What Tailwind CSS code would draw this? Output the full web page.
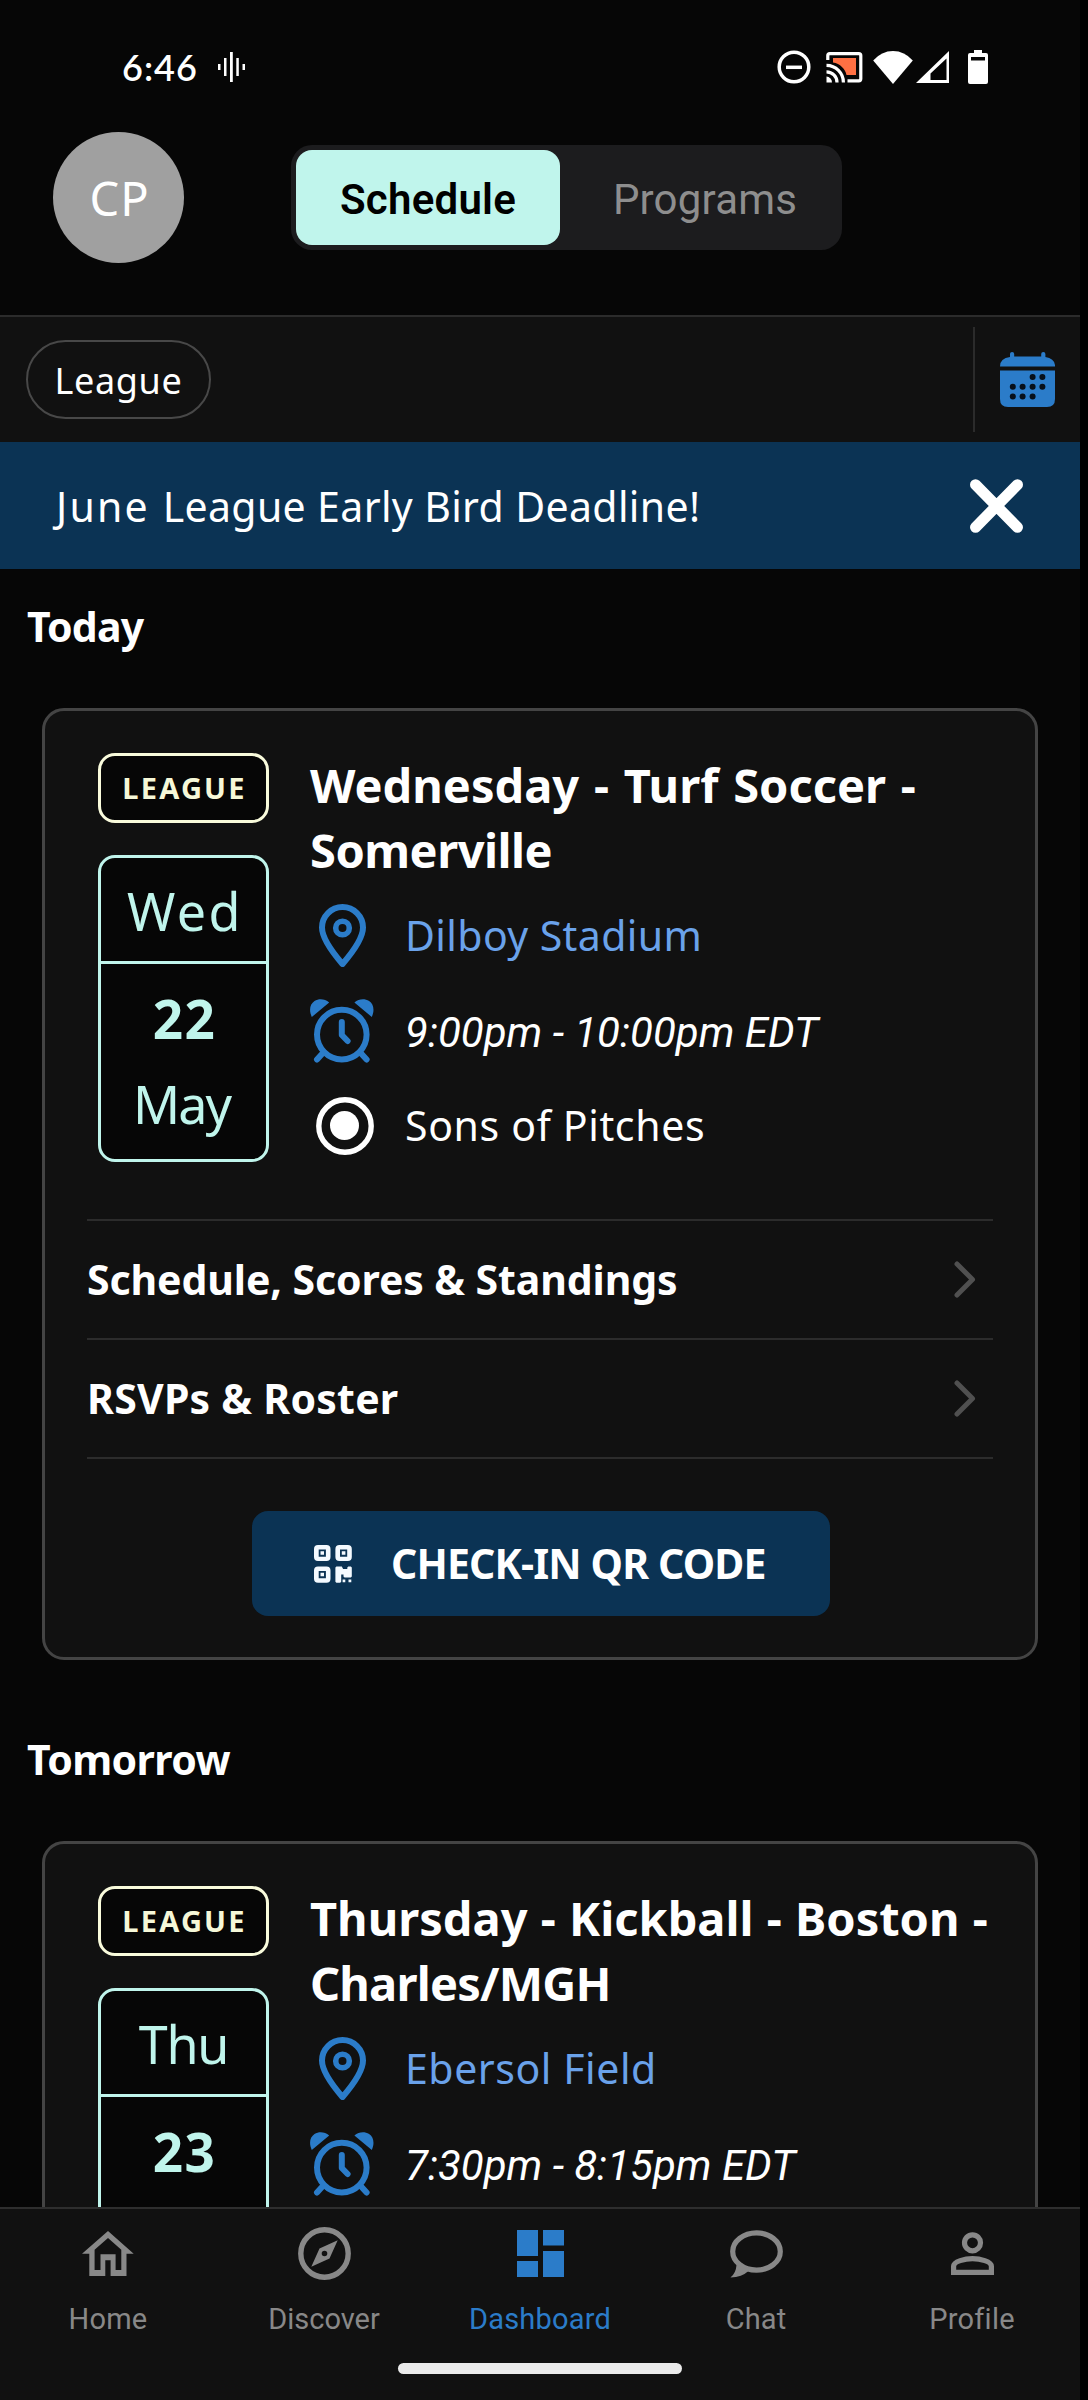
<!DOCTYPE html>
<html lang="en">
<head>
<meta charset="utf-8">
<title>Dashboard</title>
<script src="https://cdn.jsdelivr.net/npm/@tailwindcss/browser@4"></script>
</head>
<body class="bg-black">
<svg class="hidden" aria-hidden="true">
  <symbol id="pin" viewBox="0 0 47 63">
    <path d="M23.5 60C20.5 56.500 3 36.500 3 23.500a20.500 20.500 0 0 1 41 0C44 36.500 26.500 56.500 23.500 60Z" fill="none" stroke="currentColor" stroke-width="6" stroke-linejoin="round"/>
    <circle cx="23.500" cy="24" r="6.800" fill="none" stroke="currentColor" stroke-width="5.600"/>
  </symbol>
  <symbol id="alarm" viewBox="0 0 64 64">
    <g fill="none" stroke="currentColor" stroke-width="6" stroke-linecap="round" stroke-linejoin="round">
      <circle cx="31.800" cy="35.600" r="24.800"/>
      <path d="M31.800 23v13l5.800 6M12 55l-5 5.500M51.600 55l5 5.500"/>
    </g>
    <path d="M1.800 18C-1.500 10.500 .2 5 4.500 2 9-.9 14.800-.3 19.200 3.400ZM61.800 18C65 10.500 63.400 5 59.100 2 54.600-.9 48.800-.3 44.400 3.400Z" fill="currentColor"/>
  </symbol>
  <symbol id="chevron" viewBox="0 0 22 37">
    <path d="M3 3l15.500 15.500L3 34" fill="none" stroke="currentColor" stroke-width="5" stroke-linecap="round" stroke-linejoin="round"/>
  </symbol>
</svg>

<div class="flex h-[2400px] w-[1080px] flex-col overflow-hidden bg-[#060606] font-['Noto_Sans',sans-serif] text-white">

  <!-- Status bar -->
  <div class="mt-[47px] flex h-[40px] shrink-0 items-center pr-[92px] pl-[122px]">
    <span class="w-[96px] font-[Lato,sans-serif] text-[36px] font-semibold leading-[40px] tracking-[1px]">6:46</span>
    <svg class="h-[30px] w-[28px]" viewBox="0 0 28 30" fill="#fff"><path d="M0 12h2.500v6H0zM6 6h2.500v18H6zM12 0h2.800v30H12zM18.300 6h2.500v18h-2.500zM24.500 12H27v6h-2.500z"/></svg>
    <div class="ml-auto flex items-center">
      <svg class="h-[34px] w-[34px]" viewBox="0 0 34 34" fill="none" stroke="#fff" stroke-width="3.500"><circle cx="17" cy="17" r="14.800"/><path d="M9 17.300h16"/></svg>
      <svg class="ml-[15px] h-[31px] w-[37px]" viewBox="0 0 37 31">
        <path d="M7 6h23v17h-9.500C19.500 17 14 11.500 7 10.500Z" fill="#ff7043"/>
        <g fill="none" stroke="#fff" stroke-width="3.200"><path d="M1.800 8V3.600q0-2 2-2h29q2 0 2 2v23.200q0 2-2 2H21.500"/><path d="M.5 19.800A10.600 10.600 0 0 1 11 30.400M.5 13.400A17 17 0 0 1 17.400 30.400"/></g>
        <path d="M.5 24.600a5.800 5.800 0 0 1 5.500 5.800H.5z" fill="#fff"/>
      </svg>
      <svg class="ml-[10px] h-[33px] w-[40px]" viewBox="0 0 40 33" fill="#fff"><path d="M20 33 .2 9.500Q8.500 0 20 0t19.800 9.500Z"/></svg>
      <svg class="ml-[3px] h-[32px] w-[33px]" viewBox="0 0 33 32" fill="#fff" fill-rule="evenodd"><path d="M33 0v32H0ZM30.500 7.500 14.500 22.500v6.500h16Z"/></svg>
      <svg class="ml-[19px] h-[34px] w-[20px]" viewBox="0 0 20 34" fill="#fff" fill-rule="evenodd"><path d="M6 0h8v3h4q2 0 2 2v27q0 2-2 2H2q-2 0-2-2V5q0-2 2-2h4ZM3 7v3.500h14V7Z"/></svg>
    </div>
  </div>

  <!-- Header -->
  <header class="flex h-[228px] shrink-0 items-start pl-[53px]">
    <div class="mt-[45px] flex size-[131px] items-center justify-center rounded-full bg-[#a0a0a0] pl-[2px] pt-[1px] text-[47px] tracking-[1px]">CP</div>
    <div class="mt-[58px] ml-[107px] flex h-[105px] w-[551px] rounded-[21px] bg-[#1c1c1e] p-[5px] font-[Roboto,sans-serif] text-[42px]">
      <div class="flex h-[95px] w-[264px] items-center justify-center rounded-[16px] bg-[#c0f5ec] pt-[4px] font-semibold tracking-[.25px] text-black">Schedule</div>
      <div class="flex h-[95px] flex-1 items-center justify-center pt-[4px] pl-[13px] tracking-[.2px] text-[#8e8e8e]">Programs</div>
    </div>
  </header>

  <!-- Filters -->
  <div class="flex h-[127px] shrink-0 items-center border-t-2 border-[#2b2b2b] bg-[#111] pl-[26px]">
    <div class="flex h-[79px] w-[185px] items-center justify-center rounded-full border-2 border-[#484848] pt-[2px] text-[36px] tracking-[.65px]">League</div>
    <div class="ml-auto flex h-[105px] w-[107px] items-center border-l-2 border-[#2b2b2b] pl-[25px]">
      <svg class="h-[55px] w-[55px]" viewBox="0 0 55 55" fill="#2b7cc9">
        <path d="M10 5V2q0-2 2.100-2t2.100 2v2.500h27V2q0-2 2.100-2t2.100 2v3q9.700 1.500 9.700 9.500H0Q0 6 10 5ZM0 18.500h55V47q0 8-8 8H8q-8 0-8-8Z"/>
        <g fill="#07101a"><circle cx="32.600" cy="25" r="3"/><circle cx="42.400" cy="25" r="3"/><circle cx="12.800" cy="34.800" r="3"/><circle cx="22.600" cy="34.800" r="3"/><circle cx="32.600" cy="34.800" r="3"/><circle cx="42.400" cy="34.800" r="3"/><circle cx="12.800" cy="44.500" r="3"/><circle cx="22.600" cy="44.500" r="3"/><circle cx="32.600" cy="44.500" r="3"/></g>
      </svg>
    </div>
  </div>

  <!-- Announcement -->
  <div class="flex h-[127px] shrink-0 items-center justify-between bg-[#0b3354] pr-[57px] pl-[56px]">
    <span class="pt-[2px] text-[41px] tracking-[.36px]"><span class="tracking-[2.200px]">June </span>League Early Bird Deadline!</span>
    <svg class="h-[54px] w-[53px]" viewBox="0 0 53 54" stroke="#fff" stroke-width="11" stroke-linecap="round"><path d="M5.500 5.700l42 42.600M47.500 5.700l-42 42.600"/></svg>
  </div>

  <!-- Schedule list -->
  <main class="min-h-0 flex-1 overflow-hidden pt-[27px]">
    <h2 class="pl-[27px] text-[41px] font-bold leading-[60px] tracking-[-.8px]">Today</h2>

    <section class="mt-[52px] ml-[42px] w-[996px] rounded-[22px] border-[3px] border-[#444] bg-[#111] pt-[42px] pb-[41px]">
      <div class="flex h-[466px] gap-[41px] pl-[53px]">
        <div class="w-[171px] shrink-0">
          <div class="flex h-[70px] items-center justify-center rounded-[17px] border-[3px] border-[#f9fbdc] bg-[#060606] pl-[2px] text-[29px] font-bold tracking-[2.230px] text-[#f6f8d8]">LEAGUE</div>
          <div class="mt-[32px] h-[307px] rounded-[17px] border-[3px] border-[#c0f5ec] bg-[#060606] text-center text-[52px] text-[#c0f5ec]">
            <div class="h-[106px] border-b-[3px] border-[#c0f5ec] pl-[3px] leading-[106px] tracking-[2.500px]">Wed</div>
            <div class="pt-[12px] pl-[2px] text-[53px] font-bold leading-[85px] tracking-[1.500px]">22</div>
            <div class="pr-[4px] leading-[85px] tracking-[-2px]">May</div>
          </div>
        </div>
        <div class="w-[700px]">
          <h3 class="text-[47px] font-bold leading-[65px]"><span class="[word-spacing:2.600px]">Wednesday - Turf Soccer -</span> <span class="tracking-[-.5px]">Somerville</span></h3>
          <div class="mt-[5px] flex h-[95px] items-center">
            <div class="flex w-[64px] justify-center"><svg class="h-[63px] w-[47px] text-[#2b7cc9]"><use href="#pin"/></svg></div>
            <span class="ml-[31px] text-[41px] tracking-[.4px] text-[#6aa2ea]">Dilboy Stadium</span>
          </div>
          <div class="flex h-[95px] items-center">
            <svg class="h-[64px] w-[64px] text-[#2b7cc9]"><use href="#alarm"/></svg>
            <span class="ml-[31px] pt-[4px] font-[Roboto,sans-serif] text-[42px] italic">9:00pm - 10:00pm EDT</span>
          </div>
          <div class="flex h-[95px] items-center">
            <div class="flex w-[64px] justify-end"><svg class="h-[58px] w-[58px]" viewBox="0 0 58 58"><circle cx="29" cy="29" r="26.200" fill="none" stroke="#fff" stroke-width="5.400"/><circle cx="28.500" cy="28.500" r="14.500" fill="#fff"/></svg></div>
            <span class="ml-[31px] text-[41px] tracking-[.65px]">Sons of Pitches</span>
          </div>
        </div>
      </div>
      <div class="mx-[42px] border-b-2 border-[#2c2c2c] text-[41px] font-bold">
        <div class="flex h-[119px] items-center justify-between border-t-2 border-[#2c2c2c] pr-[17px]">
          <span class="tracking-[-.1px]">Schedule, Scores &amp; Standings</span>
          <svg class="h-[37px] w-[22px] text-[#505050]"><use href="#chevron"/></svg>
        </div>
        <div class="flex h-[119px] items-center justify-between border-t-2 border-[#2c2c2c] pr-[17px]">
          <span class="tracking-[.25px]">RSVPs &amp; Roster</span>
          <svg class="h-[37px] w-[22px] text-[#505050]"><use href="#chevron"/></svg>
        </div>
      </div>
      <button class="mt-[52px] ml-[207px] flex h-[105px] w-[578px] items-center rounded-[16px] bg-[#0b3354] pl-[62px]">
        <svg class="h-[38px] w-[38px]" viewBox="0 0 38 38" fill="#f4faff">
          <path fill-rule="evenodd" d="M4 0h8.500q4 0 4 4v8q0 4-4 4H4q-4 0-4-4V4q0-4 4-4ZM4.700 4.500v7.200h7.200V4.500ZM25.400 0h8.400q4 0 4 4v8q0 4-4 4h-8.400q-4 0-4-4V4q0-4 4-4ZM26 4.500v7.200h7.200V4.500ZM4 21.500h8.500q4 0 4 4v8.200q0 4-4 4H4q-4 0-4-4v-8.200q0-4 4-4ZM4.700 26v7.200h7.200V26Z"/>
          <path d="M6.500 6.200H10V9.800H6.500zM27.800 6.200h3.600v3.600h-3.600zM6.500 27.700H10v3.600H6.500zM22.400 21.500h5.400l1.300 2.500h4.200v-1.500l1-1h2.500l1 1v9l-1 1h-6.300l-1-1v-2h-2.300v7.200l-1 1h-3.800l-1-1V22.500zM28.600 34.500h2.700v2.800h-2.700zM34.500 34.500h2.800v2.800h-2.800z"/>
        </svg>
        <span class="ml-[39px] text-[41px] font-bold tracking-[-.85px]">CHECK-IN QR CODE</span>
      </button>
    </section>

    <h2 class="mt-[69px] pl-[27px] text-[41px] font-bold leading-[60px] tracking-[-.6px]">Tomorrow</h2>

    <section class="mt-[52px] ml-[42px] w-[996px] rounded-[22px] border-[3px] border-[#444] bg-[#111] pt-[42px] pb-[41px]">
      <div class="flex h-[466px] gap-[41px] pl-[53px]">
        <div class="w-[171px] shrink-0">
          <div class="flex h-[70px] items-center justify-center rounded-[17px] border-[3px] border-[#f9fbdc] bg-[#060606] pl-[2px] text-[29px] font-bold tracking-[2.230px] text-[#f6f8d8]">LEAGUE</div>
          <div class="mt-[32px] h-[307px] rounded-[17px] border-[3px] border-[#c0f5ec] bg-[#060606] text-center text-[52px] text-[#c0f5ec]">
            <div class="h-[106px] border-b-[3px] border-[#c0f5ec] leading-[106px] tracking-[-1.200px]">Thu</div>
            <div class="pt-[12px] pl-[2px] text-[53px] font-bold leading-[85px] tracking-[1.500px]">23</div>
          </div>
        </div>
        <div class="w-[700px]">
          <h3 class="text-[47px] font-bold leading-[65px]"><span class="[word-spacing:1px]">Thursday - Kickball - Boston -</span> <span class="tracking-[-.8px]">Charles/MGH</span></h3>
          <div class="mt-[5px] flex h-[95px] items-center">
            <div class="flex w-[64px] justify-center"><svg class="h-[63px] w-[47px] text-[#2b7cc9]"><use href="#pin"/></svg></div>
            <span class="ml-[31px] text-[41px] tracking-[.56px] text-[#6aa2ea]">Ebersol Field</span>
          </div>
          <div class="flex h-[95px] items-center">
            <svg class="h-[64px] w-[64px] text-[#2b7cc9]"><use href="#alarm"/></svg>
            <span class="ml-[31px] pt-[4px] font-[Roboto,sans-serif] text-[42px] italic">7:30pm - 8:15pm EDT</span>
          </div>
        </div>
      </div>
    </section>
  </main>

  <!-- Bottom navigation -->
  <nav class="h-[193px] shrink-0 border-t-2 border-[#2e2e2e] bg-[#111] pt-[18px] font-[Roboto,sans-serif] text-[29px] leading-[40px] text-[#888]">
    <div class="grid grid-cols-5">
      <div class="flex flex-col items-center">
        <div class="flex h-[53px] items-center"><svg class="h-[45px] w-[52px]" viewBox="0 0 52 45" fill="currentColor" fill-rule="evenodd"><path d="M26 0l25.700 22.700h-7.200V45H28.600V29.300h-5.300V45H7.300V22.700H0ZM26 6.900 12.600 18.700V39h5.900V23.300h15.100V39h5.700V18.700Z"/></svg></div>
        <span class="mt-[19px] tracking-[.2px]">Home</span>
      </div>
      <div class="flex flex-col items-center">
        <div class="flex h-[53px] items-center"><svg class="h-[53px] w-[53px]" viewBox="0 0 53 53"><circle cx="26.500" cy="26.500" r="23.700" fill="none" stroke="currentColor" stroke-width="5.400"/><path fill="currentColor" fill-rule="evenodd" d="M39.700 13.300 31.500 31.500 13.300 39.700 21.500 21.500ZM26.500 23.700a2.800 2.800 0 1 0 0 5.600 2.800 2.800 0 1 0 0-5.600Z"/></svg></div>
        <span class="mt-[19px]">Discover</span>
      </div>
      <div class="flex flex-col items-center text-[#2b7cc9]">
        <div class="flex h-[53px] items-center"><svg class="h-[47px] w-[47px]" viewBox="0 0 47 47" fill="currentColor"><path d="M0 0h21v26H0zM0 31h21v16H0zM26 0h21v15.500H26zM26 21h21v26H26z"/></svg></div>
        <span class="mt-[19px] tracking-[.2px]">Dashboard</span>
      </div>
      <div class="flex flex-col items-center">
        <div class="flex h-[53px] items-center"><svg class="h-[48px] w-[53px]" viewBox="0 0 53 48"><ellipse cx="26.500" cy="21.500" rx="23.800" ry="18.600" fill="none" stroke="currentColor" stroke-width="5.200"/><path d="M.5 47.500Q6 43 6.500 35l12 6Q12 47 .5 47.500Z" fill="currentColor"/></svg></div>
        <span class="mt-[19px] tracking-[.1px]">Chat</span>
      </div>
      <div class="flex flex-col items-center">
        <div class="flex h-[53px] items-center"><svg class="h-[43px] w-[43px]" viewBox="0 0 43 43" fill="none" stroke="currentColor" stroke-width="5.200"><circle cx="21.500" cy="10.800" r="8"/><path d="M2.600 40.400v-6.200C2.600 29.500 14 26.600 21.500 26.600S40.400 29.500 40.400 34.200v6.200Z"/></svg></div>
        <span class="mt-[19px] tracking-[.25px]">Profile</span>
      </div>
    </div>
    <div class="mt-[24px] ml-[398px] h-[11px] w-[284px] rounded-full bg-[#ebebeb]"></div>
  </nav>
</div>
</body>
</html>
